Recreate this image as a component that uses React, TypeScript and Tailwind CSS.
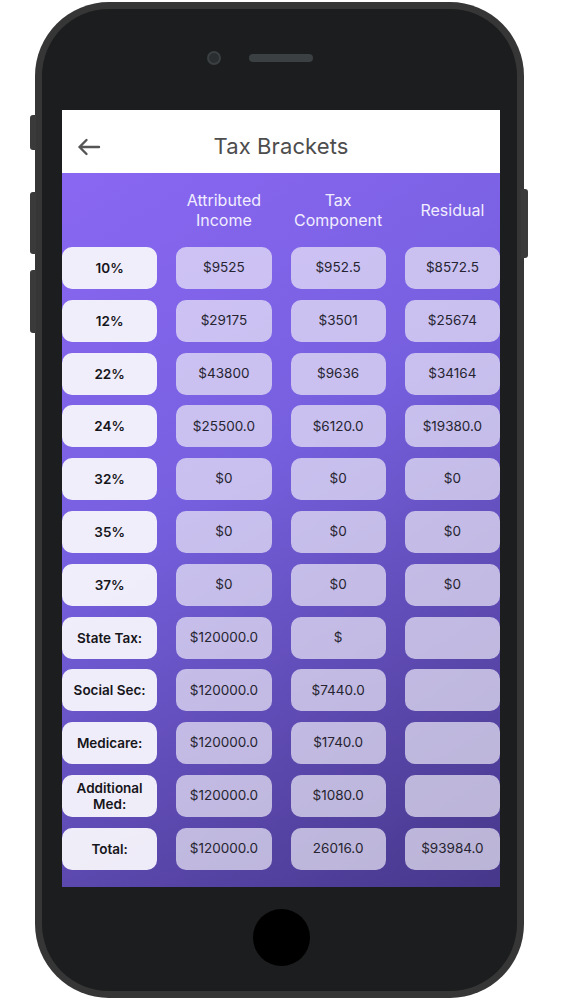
import React from "react";

const rows: { label: string; a: string; b: string; c: string }[] = [
  { label: "10%", a: "$9525", b: "$952.5", c: "$8572.5" },
  { label: "12%", a: "$29175", b: "$3501", c: "$25674" },
  { label: "22%", a: "$43800", b: "$9636", c: "$34164" },
  { label: "24%", a: "$25500.0", b: "$6120.0", c: "$19380.0" },
  { label: "32%", a: "$0", b: "$0", c: "$0" },
  { label: "35%", a: "$0", b: "$0", c: "$0" },
  { label: "37%", a: "$0", b: "$0", c: "$0" },
  { label: "State Tax:", a: "$120000.0", b: "$", c: "" },
  { label: "Social Sec:", a: "$120000.0", b: "$7440.0", c: "" },
  { label: "Medicare:", a: "$120000.0", b: "$1740.0", c: "" },
  { label: "Additional Med:", a: "$120000.0", b: "$1080.0", c: "" },
  { label: "Total:", a: "$120000.0", b: "26016.0", c: "$93984.0" },
];

function Cell({ children }: { children?: React.ReactNode }) {
  return (
    <div className="h-[42px] rounded-[10px] bg-[#ece9f7]/70 flex items-center justify-center text-[13.5px] text-[#262430] leading-none">
      {children}
    </div>
  );
}

export default function App() {
  return (
    <div
      className="w-[563px] h-[1000px] bg-white relative overflow-hidden"
      style={{ fontFamily: "Inter, 'Noto Sans', sans-serif" }}
    >
      {/* side buttons */}
      <div className="absolute left-[30px] top-[115px] w-[6px] h-[35px] rounded-l-[3px] bg-[#3a3a3a]" />
      <div className="absolute left-[30px] top-[192px] w-[6px] h-[62px] rounded-l-[3px] bg-[#3a3a3a]" />
      <div className="absolute left-[30px] top-[270px] w-[6px] h-[63px] rounded-l-[3px] bg-[#3a3a3a]" />
      <div className="absolute left-[521px] top-[189px] w-[7px] h-[69px] rounded-r-[3px] bg-[#3a3a3a]" />

      <div className="pl-[35px] pt-[2px]">
        <div className="w-[489px] h-[996px] rounded-[74px] bg-[#363636] p-[7px]">
          <div className="w-full h-full rounded-[67px] bg-[#1b1d1e] flex flex-col pl-[20px]">
            {/* top bezel */}
            <div className="h-[101px] w-[438px] relative flex items-center justify-center">
              <div className="w-[64px] h-[8px] rounded-full bg-[#3b4042] mt-[-4px]" />
              <div className="absolute left-[145px] top-[42px] w-[14px] h-[14px] rounded-full bg-[#2a2e30] border-[2px] border-[#3a3f41]" />
            </div>

            {/* screen */}
            <div className="w-[438px] h-[777px] flex flex-col">
              <div className="h-[63px] bg-white relative flex items-center justify-center shrink-0">
                <svg
                  className="absolute left-[15px] top-[28px]"
                  width="24"
                  height="18"
                  viewBox="0 0 24 18"
                  fill="none"
                  stroke="#555555"
                  strokeWidth="2.4"
                  strokeLinecap="round"
                  strokeLinejoin="round"
                >
                  <path d="M22 9H2.5M9.5 2L2.5 9L9.5 16" />
                </svg>
                <span className="text-[22px] text-[#4d4d4d] tracking-[0.1px] mt-[10px]">
                  Tax Brackets
                </span>
              </div>

              <div className="flex-1 bg-[linear-gradient(148deg,#8a67f2_0%,#7760e0_40%,#5a47ab_75%,#46378a_100%)]">
                <div className="grid grid-cols-4 gap-x-[19px] h-[74px] items-center text-[16px] leading-[20px] text-[#f1edff] text-center">
                  <div />
                  <div>
                    Attributed
                    <br />
                    Income
                  </div>
                  <div>
                    Tax
                    <br />
                    Component
                  </div>
                  <div>Residual</div>
                </div>
                <div className="grid grid-cols-4 gap-x-[19px] gap-y-[10.8px]">
                  {rows.map((r) => (
                    <React.Fragment key={r.label}>
                      <div className="h-[42px] rounded-[10px] bg-[#f7f5fc]/95 flex items-center justify-center text-center text-[13.5px] font-semibold text-[#16151a] leading-[16px] px-[8px]">
                        {r.label}
                      </div>
                      <Cell>{r.a}</Cell>
                      <Cell>{r.b}</Cell>
                      <Cell>{r.c}</Cell>
                    </React.Fragment>
                  ))}
                </div>
              </div>
            </div>

            {/* bottom bezel */}
            <div className="w-[438px] flex justify-center pt-[22px]">
              <div className="w-[57px] h-[57px] rounded-full bg-black" />
            </div>
          </div>
        </div>
      </div>
    </div>
  );
}
